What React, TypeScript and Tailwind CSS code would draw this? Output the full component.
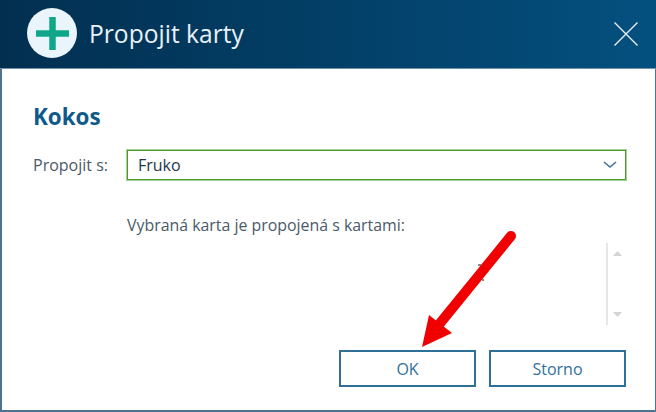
export default function App() {
  return (
    <div className="relative w-[656px] h-[412px] flex flex-col bg-white font-['Open_Sans',sans-serif] overflow-hidden">
      <header className="h-[69px] shrink-0 flex items-center pl-[27px] pr-[17px] bg-gradient-to-r from-[#022f50] to-[#04507f] border-b border-[#6f93ad]">
        <div className="w-[50px] h-[50px] mb-[2px] rounded-full bg-[#e9f4fb] flex items-center justify-center">
          <svg width="33" height="33" viewBox="0 0 33 33">
            <path d="M16.5 0v33M0 16.5h33" stroke="#0fa68a" strokeWidth="6.5" fill="none" />
          </svg>
        </div>
        <h1 className="ml-[12px] text-[24.6px] leading-none text-[#e8f1f7]">Propojit karty</h1>
        <svg className="ml-auto" width="26" height="26" viewBox="0 0 26 26">
          <path d="M1.5 1.5l23 23M24.5 1.5l-23 23" stroke="#e8eef3" strokeWidth="1.4" fill="none" />
        </svg>
      </header>

      <main className="flex-1 flex flex-col border-l-2 border-r border-b-2 border-[#4d7391] pl-[31px] pr-[29px]">
        <h2 className="mt-[33px] text-[22.4px] leading-[30px] font-bold text-[#0f5a8a]">Kokos</h2>

        <div className="mt-[18px] flex items-center">
          <label className="w-[94px] text-[16px] text-[#4a5a68]">Propojit s:</label>
          <div className="flex-1 h-[30px] flex items-center justify-between pl-[10px] pr-[8px] border border-[#4e9a26] ring-1 ring-[#a9cf9b] text-[16px] text-[#22364a]">
            <span>Fruko</span>
            <svg width="14" height="8" viewBox="0 0 14 8">
              <path d="M1 1l6 5 6-5" stroke="#44709c" strokeWidth="1.6" fill="none" />
            </svg>
          </div>
        </div>

        <p className="mt-[35px] ml-[94px] text-[15.9px] leading-[20px] text-[#4a5a68]">
          Vybraná karta je propojená s kartami:
        </p>

        <div className="mt-[8px] h-[82px] flex justify-end pr-[4px]">
          <div className="w-[16px] border-l-2 border-[#e6e6e6] flex flex-col items-center justify-between py-[8px] pl-[4px] text-[#d4d4d4]">
            <svg width="9" height="5" viewBox="0 0 9 5"><path d="M4.5 0L9 5H0z" fill="currentColor" /></svg>
            <svg width="9" height="5" viewBox="0 0 9 5"><path d="M0 0h9L4.5 5z" fill="currentColor" /></svg>
          </div>
        </div>

        <div className="mt-[25px] flex justify-end gap-[13px]">
          <button className="w-[137px] h-[37px] border-2 border-[#2f7099] text-[16px] text-[#2f6f9c]">OK</button>
          <button className="w-[137px] h-[37px] border-2 border-[#2f7099] text-[16px] text-[#2f6f9c]">Storno</button>
        </div>
      </main>

      {/* red arrow annotation sits over the dialog */}
      <svg className="absolute left-0 top-0 pointer-events-none" width="656" height="412" viewBox="0 0 656 412">
        <path d="M478 265h3M482 280h2" stroke="#111" strokeWidth="1" fill="none" />
        <path d="M511 236L437 327" stroke="#f00000" strokeWidth="10" strokeLinecap="round" fill="none" />
        <path d="M422 347L429 315L452 333z" fill="#f00000" />
      </svg>
    </div>
  );
}
